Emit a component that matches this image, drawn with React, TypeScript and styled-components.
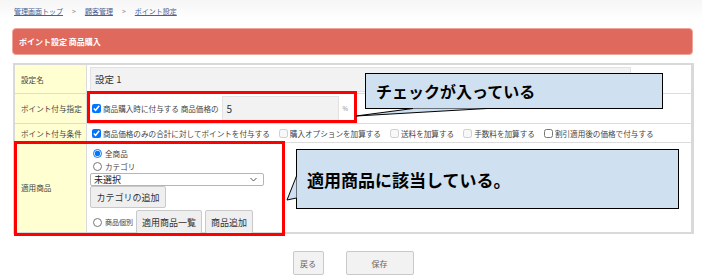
import styled, { createGlobalStyle } from "styled-components";

const GlobalStyle = createGlobalStyle`
  body {
    margin: 0;
    background: #fff;
    font-family: "Noto Sans CJK JP", "Noto Sans", sans-serif;
    color: #333;
  }
`;

const Page = styled.div`
  position: relative;
  width: 702px;
  height: 279px;
  overflow: hidden;
`;

const Breadcrumb = styled.nav`
  height: 21px;
  display: flex;
  align-items: center;
  gap: 9px;
  padding-left: 14px;
  font-size: 7px;
  color: #888;
  background: linear-gradient(#f6f6f6, #fff);
`;

const Crumb = styled.a`
  color: #4b5f93;
  text-decoration: underline;
`;

const Header = styled.div`
  margin: 7px 9px 0 12px;
  height: 25px;
  display: flex;
  align-items: center;
  padding-left: 6px;
  background: #df695c;
  border: 1px solid #eda49b;
  border-radius: 4px;
  color: #fff;
  font-size: 8px;
  font-weight: 700;
`;

const Table = styled.div`
  margin: 8px 0 0 13px;
  width: 676px;
  display: grid;
  grid-template-columns: 72px 1fr;
  grid-template-rows: 29px 30px 19px 89px;
  border: 2px solid #d9d9d9;
  border-right-width: 3px;
  font-size: 7.6px;
`;

const Label = styled.div<{ $last?: boolean }>`
  display: flex;
  align-items: center;
  padding-left: 6px;
  background: #ffffd2;
  border-right: 1px solid #dcdcdc;
  border-bottom: ${(p) => (p.$last ? "none" : "1px solid #dcdcdc")};
  color: #444;
`;

const Cell = styled.div<{ $last?: boolean }>`
  display: flex;
  align-items: ${(p) => (p.$last ? "flex-start" : "center")};
  padding-left: 3px;
  background: #fff;
  border-bottom: ${(p) => (p.$last ? "none" : "1px solid #dcdcdc")};
`;

const TextBox = styled.div<{ $w: number; $h: number; $size?: number }>`
  width: ${(p) => p.$w}px;
  height: ${(p) => p.$h}px;
  display: flex;
  align-items: center;
  padding-left: 4px;
  box-sizing: border-box;
  background: #f2f2f2;
  border: 1px solid #e2e2e2;
  font-size: ${(p) => p.$size ?? 9.5}px;
  color: #333;
`;

const Check = styled.label<{ $gap?: number }>`
  display: inline-flex;
  align-items: center;
  gap: 2px;
  margin-right: ${(p) => p.$gap ?? 7}px;
  white-space: nowrap;
  color: #444;

  input {
    width: 9px;
    height: 9px;
    margin: 0 0 0 2px;
  }
`;

const Percent = styled.span`
  margin-left: 4px;
  font-size: 6px;
  color: #888;
`;

const Stack = styled.div`
  display: flex;
  flex-direction: column;
  align-items: flex-start;
  padding-top: 4px;
`;

const Radio = styled.label<{ $small?: boolean }>`
  display: inline-flex;
  align-items: center;
  gap: 3px;
  height: 13px;
  font-size: ${(p) => (p.$small ? "7px" : "7.6px")};
  color: #444;

  input {
    width: 9px;
    height: 9px;
    margin: 0 0 0 3px;
  }
`;

const Select = styled.div`
  width: 174px;
  height: 13px;
  box-sizing: border-box;
  display: flex;
  align-items: center;
  justify-content: space-between;
  padding: 0 6px 0 3px;
  border: 1px solid #b5b5b5;
  border-radius: 2px;
  font-size: 9px;
  color: #222;
`;

const Btn = styled.button<{ $w: number; $h: number }>`
  width: ${(p) => p.$w}px;
  height: ${(p) => p.$h}px;
  padding: 0;
  background: #efefef;
  border: 1px solid #c9c9c9;
  border-radius: 2px;
  font-family: inherit;
  font-size: 9px;
  color: #333;
`;

const BtnRow = styled.div`
  display: flex;
  align-items: center;
  gap: 3px;
  margin-top: 2px;
`;

const Footer = styled.div`
  display: flex;
  justify-content: center;
  gap: 22px;
  margin-top: 17px;
  padding-left: 4px;

  ${Btn} {
    font-size: 8px;
    color: #666;
    background: #f2f2f2;
  }
`;

const RedBox = styled.div<{ $x: number; $y: number; $w: number; $h: number }>`
  position: absolute;
  left: ${(p) => p.$x}px;
  top: ${(p) => p.$y}px;
  width: ${(p) => p.$w}px;
  height: ${(p) => p.$h}px;
  box-sizing: border-box;
  border: 3px solid #f00;
  pointer-events: none;
`;

const Callout = styled.div<{ $x: number; $y: number; $w: number; $h: number; $size: number }>`
  position: absolute;
  left: ${(p) => p.$x}px;
  top: ${(p) => p.$y}px;
  width: ${(p) => p.$w}px;
  height: ${(p) => p.$h}px;
  box-sizing: border-box;
  display: flex;
  align-items: center;
  padding-left: 10px;
  background: #cfe0f1;
  border: 1px solid #000;
  font-size: ${(p) => p.$size}px;
  font-weight: 700;
  color: #000;
`;

const Tail = styled.svg`
  position: absolute;
  left: 0;
  top: 0;
  pointer-events: none;
`;

export default function App() {
  return (
    <Page>
      <GlobalStyle />
      <Breadcrumb>
        <Crumb>管理画面トップ</Crumb>
        <span>&gt;</span>
        <Crumb>顧客管理</Crumb>
        <span>&gt;</span>
        <Crumb>ポイント設定</Crumb>
      </Breadcrumb>

      <Header>ポイント設定 商品購入</Header>

      <Table>
        <Label>設定名</Label>
        <Cell>
          <TextBox $w={541} $h={25}>設定 1</TextBox>
        </Cell>

        <Label>ポイント付与指定</Label>
        <Cell>
          <Check $gap={3}>
            <input type="checkbox" defaultChecked />
            商品購入時に付与する 商品価格の
          </Check>
          <TextBox $w={117} $h={25} $size={10}>
            5
          </TextBox>
          <Percent>%</Percent>
        </Cell>

        <Label>ポイント付与条件</Label>
        <Cell>
          <Check>
            <input type="checkbox" defaultChecked />
            商品価格のみの合計に対してポイントを付与する
          </Check>
          <Check>
            <input type="checkbox" disabled />
            購入オプションを加算する
          </Check>
          <Check>
            <input type="checkbox" disabled />
            送料を加算する
          </Check>
          <Check>
            <input type="checkbox" disabled />
            手数料を加算する
          </Check>
          <Check>
            <input type="checkbox" />
            割引適用後の価格で付与する
          </Check>
        </Cell>

        <Label $last>適用商品</Label>
        <Cell $last>
          <Stack>
            <Radio>
              <input type="radio" name="target" defaultChecked />
              全商品
            </Radio>
            <Radio>
              <input type="radio" name="target" />
              カテゴリ
            </Radio>
            <Select>
              <span>未選択</span>
              <svg width="7" height="5" viewBox="0 0 7 5">
                <path d="M0.5 1 L3.5 4 L6.5 1" fill="none" stroke="#555" strokeWidth="1" />
              </svg>
            </Select>
            <Btn $w={76} $h={22}>カテゴリの追加</Btn>
            <BtnRow>
              <Radio $small>
                <input type="radio" name="target" />
                商品個別
              </Radio>
              <Btn $w={66} $h={24}>適用商品一覧</Btn>
              <Btn $w={48} $h={24}>商品追加</Btn>
            </BtnRow>
          </Stack>
        </Cell>
      </Table>

      <Footer>
        <Btn $w={31} $h={24}>戻る</Btn>
        <Btn $w={68} $h={24}>保存</Btn>
      </Footer>

      <RedBox $x={87} $y={91} $w={270} $h={32} />
      <RedBox $x={14} $y={141} $w={271} $h={95} />

      <Callout $x={365} $y={73} $w={298} $h={36} $size={16}>
        チェックが入っている
      </Callout>
      <Callout $x={296} $y={149} $w={383} $h={60} $size={17}>
        適用商品に該当している。
      </Callout>

      <Tail width={702} height={279}>
        <polygon points="413,108.5 356,116 487,108.5" fill="#cfe0f1" />
        <polyline points="413,108.5 356,116 487,108.5" fill="none" stroke="#000" strokeWidth="1" />
        <polygon points="296.5,176 287,200 296.5,198" fill="#cfe0f1" />
        <polyline points="296.5,176 287,200 296.5,198" fill="none" stroke="#000" strokeWidth="1" />
      </Tail>
    </Page>
  );
}
